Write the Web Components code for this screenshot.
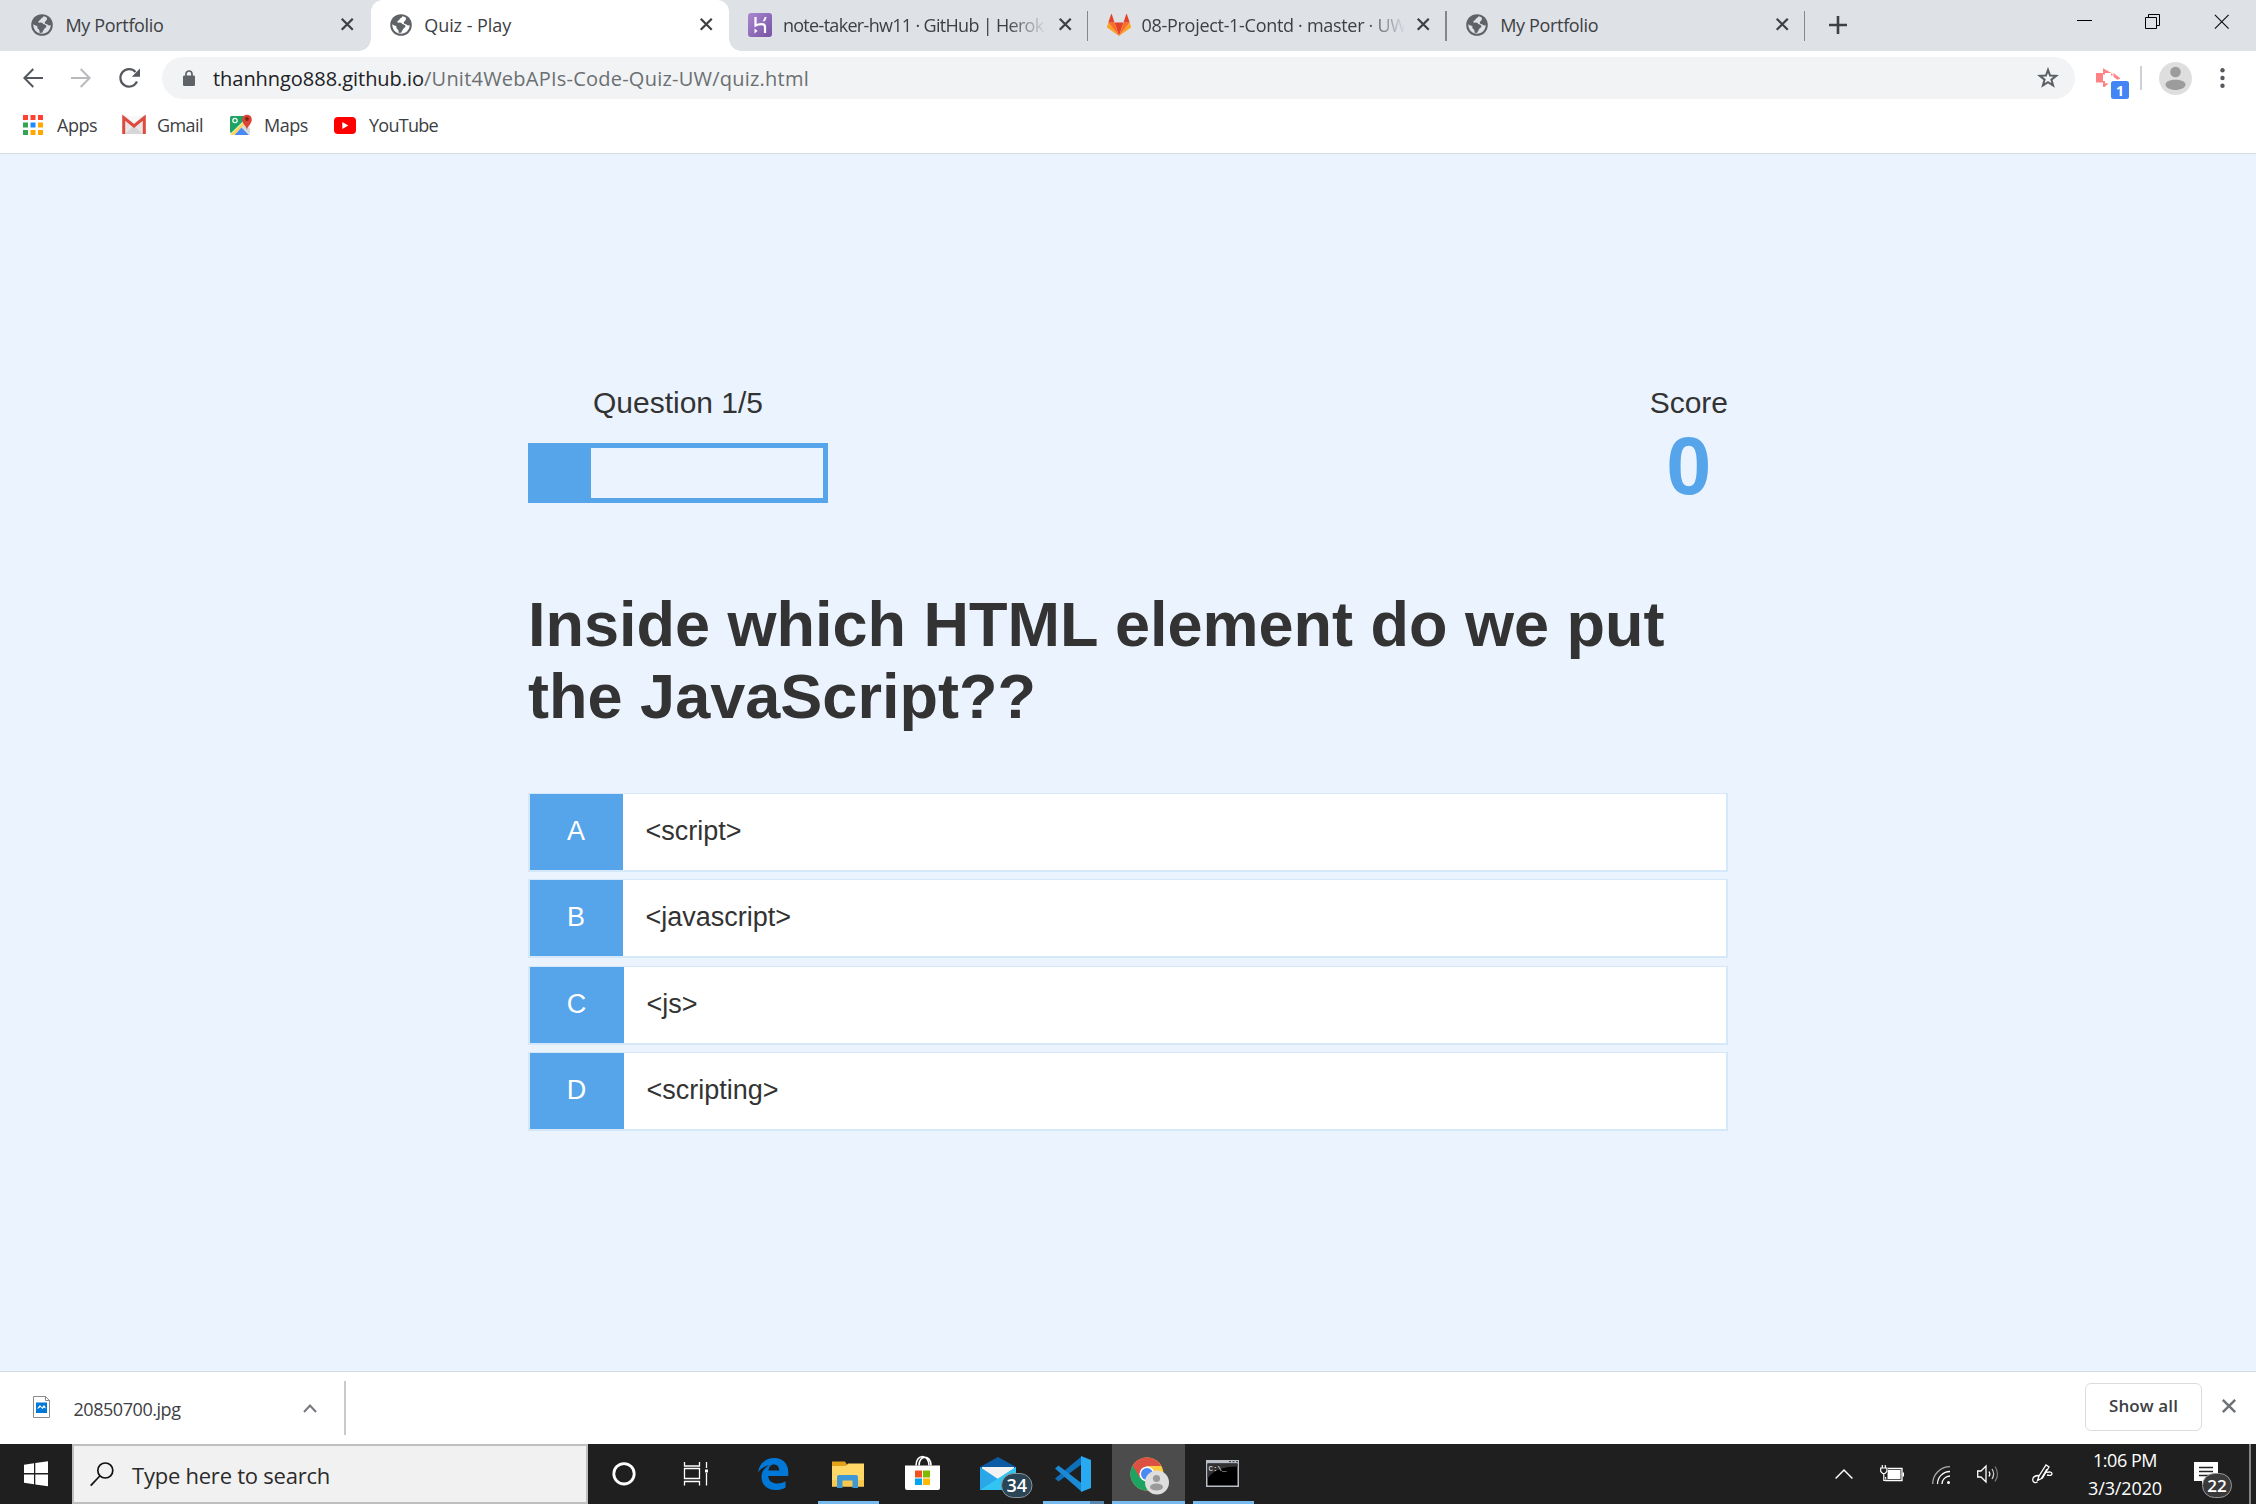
<!DOCTYPE html>
<html lang="en">
<head>
<meta charset="utf-8">
<title>Quiz - Play</title>
<style>
html,body{margin:0;padding:0}
body{width:2256px;height:1504px;overflow:hidden;display:flex;flex-direction:column;font-family:"Open Sans","Noto Sans",sans-serif;font-size:18px;color:#3c4043;background:#fff}
</style>
</head>
<body>
<tab-strip></tab-strip>
<address-bar></address-bar>
<bookmark-bar></bookmark-bar>
<quiz-game></quiz-game>
<download-shelf></download-shelf>
<task-bar></task-bar>
<script>
const globe='<svg width="22" height="22" viewBox="0 0 22 22"><circle cx="11" cy="11" r="10.8" fill="#5f6368"/><path d="M12.5 2.3C12 4 10 4 9.500 5.500c-.2 1-2 1-2.200 2.200 0 1 1.200 1 2.700.9 1.500 0 1.600 1 2.800 1.700 1.500.6 2.500.5 2.600 2 .1 1.600-1.700 1.500-2.200 2.700-.5 1.300-1.200 1.500-2 3.800-.9.2-1.700.2-2.600 0 0-1.500.1-2.800-1-3.500-1.200-.8-1.500-2-1.200-3.300C4.500 12 3 10.900 2.300 10c-.3 5.600 3.600 9.600 8.700 9.700 5 0 8.700-3.900 8.700-8.700-1 .9-2.600.3-3.300-.5-.7-.9-2.200-.4-2.600-1.600-.3-1.300 1.100-2 1.900-3 .3-.8.300-1.500.2-2.200-1.100-.8-2.200-1.200-3.400-1.400z" fill="var(--tab,#dee1e6)"/></svg>';
const X=(n,c,w)=>`<svg width="${n}" height="${n}" viewBox="0 0 12 12"><path d="M.7.7l10.600 10.600M11.300.7L.7 11.300" stroke="${c}" stroke-width="${w}"/></svg>`;
const ICONS={
 globe,
 heroku:'<svg width="24" height="24" viewBox="0 0 24 24"><defs><linearGradient id="h" x1="0" y1="0" x2="1" y2="1"><stop stop-color="#aa87cf"/><stop offset="1" stop-color="#7653a5"/></linearGradient></defs><rect width="24" height="24" rx="3" fill="url(#h)"/><path d="M7.500 4v8.500c3-1.600 9.500-2.600 9.500 1.200V20" fill="none" stroke="#fff" stroke-width="2.200"/><path d="M6.500 15.500L9.500 18l-3 2.500zM14.500 8.300c1.200-1.300 1.800-2.700 2-4.300h2c-.2 1.800-.9 3.200-2 4.300z" fill="#fff"/></svg>',
 gitlab:'<svg width="24" height="22" viewBox="0 0 24 22"><path d="M12 22l4.500-13.500h-9z" fill="#e24329"/><path d="M12 22L7.500 8.500H1.300zM12 22l4.500-13.500h6.200z" fill="#fc6d26"/><path d="M1.300 8.500L0 12.700c-.1.400 0 .8.400 1.100L12 22zM22.700 8.500L24 12.700c.1.400 0 .8-.4 1.100L12 22z" fill="#fca326"/><path d="M1.300 8.500h6.200L4.900.4c-.1-.5-.8-.5-.9 0zM22.700 8.500h-6.200L19.100.4c.1-.5.8-.5.900 0z" fill="#e24329"/></svg>',
 close:X(12.5,'#3c4043',2.1), shelfclose:X(14,'#6e7276',2.1), winclose:X(15.5,'#111',.9),
 plus:'<svg width="18" height="18" viewBox="0 0 18 18"><path d="M9 0v18M0 9h18" stroke="#3c4043" stroke-width="2.600"/></svg>',
 min:'<svg width="15" height="16"><path d="M0 7.500h15" stroke="#000"/></svg>',
 restore:'<svg width="16" height="16" fill="none" stroke="#000"><path d="M.5 3.500h11v11H.5zM3.500 3.500v-3h11v11h-3"/></svg>',
 back:'<svg width="20" height="20" viewBox="0 0 20 20" fill="none" stroke="#55595e" stroke-width="2"><path d="M20 10H1.600M10.300 1L1.400 10l8.900 9"/></svg>',
 fwd:'<svg width="20" height="20" viewBox="0 0 20 20" fill="none" stroke="#b8babd" stroke-width="2"><path d="M0 10h18.400M9.700 1l8.900 9-8.900 9"/></svg>',
 reload:'<svg width="21" height="20" viewBox="0 0 21 20"><path d="M18 13.500A8.700 8.700 0 1 1 16.500 4" fill="none" stroke="#55595e" stroke-width="2.200"/><path d="M21 .5v8.200h-8.200z" fill="#55595e"/></svg>',
 lock:'<svg width="12" height="16" viewBox="0 0 12 16"><rect y="5.500" width="12" height="10.500" rx="1.300" fill="#5f6368"/><path d="M3 6V4a3 3 0 0 1 6 0v2" fill="none" stroke="#5f6368" stroke-width="1.700"/></svg>',
 star:'<svg width="22" height="22" viewBox="0 0 22 22"><path d="M11 2.800l2.100 5.700 6.100.3-4.800 3.800 1.700 5.900L11 15.200l-5.100 3.300 1.700-5.900-4.800-3.800 6.100-.3z" fill="none" stroke="#5a5e63" stroke-width="2"/></svg>',
 ext:'<svg width="35" height="34" viewBox="0 0 35 34"><path d="M0 8h7v9.500H0zM7 3.200l8.500 4.800H7zM17.500 8l7 5.500-3.200 1.200-3.800-3zM7 18l5.500.5L8.500 22H7zM7 8h2v1.500H7zM7 16h2v2H7zM15 8.500h1.500v2H15z" fill="#ff8285"/><rect x="15" y="16" width="18" height="18" rx="2.500" fill="#4285f4"/><text x="24" y="30.500" text-anchor="middle" font-size="14" font-weight="700" fill="#fff" font-family="Open Sans">1</text></svg>',
 avatar:'<svg width="33" height="33" viewBox="0 0 33 33"><circle cx="16.500" cy="16.500" r="16.500" fill="#dedede"/><circle cx="16.500" cy="10" r="5.300" fill="#9c9c9c"/><path d="M6.500 22.500c0-3.200 5-4.800 10-4.800s10 1.600 10 4.800-5 5.500-10 5.500-10-2.300-10-5.500z" fill="#9c9c9c"/></svg>',
 dots:'<svg width="5" height="20" viewBox="0 0 5 20" fill="#55595e"><circle cx="2.500" cy="2.300" r="2.200"/><circle cx="2.500" cy="10" r="2.200"/><circle cx="2.500" cy="17.700" r="2.200"/></svg>',
 apps:'<svg width="20" height="20" viewBox="0 0 20 20"><path d="M0 0h5v5H0zM7.500 0h5v5h-5zM15 0h5v5h-5z" fill="#ff4131"/><path d="M0 7.500h5v5H0zM0 15h5v5H0z" fill="#34a354"/><path d="M7.500 7.500h5v5h-5z" fill="#1a8cff"/><path d="M15 7.500h5v5h-5zM7.500 15h5v5h-5zM15 15h5v5h-5z" fill="#ffa800"/></svg>',
 gmail:'<svg width="24" height="18" viewBox="0 0 24 18"><rect x="1" width="22" height="18" rx="1" fill="#e8e8e8"/><path d="M3 18l9-8 9 8z" fill="#d6d6d6"/><path d="M3 0h18l-9 7z" fill="#f8f8f8"/><path d="M1.700 18V1.700L12 10 22.300 1.700V18" fill="none" stroke="#dd4b3e" stroke-width="3"/></svg>',
 maps:'<svg width="23" height="22" viewBox="0 0 23 22"><rect x="0" y="2" width="20" height="19" rx="1.500" fill="#eee"/><path d="M0 3.500Q0 2 1.500 2h17L1 19 0 18z" fill="#1ea362"/><path d="M1 20L19 3l1 2L4 21H1z" fill="#ffd64b"/><path d="M4.500 21l7-7.500L19 21z" fill="#4a89f3"/><path d="M11.500 13.500L15.500 10 20 15v5z" fill="#d8d8d8"/><circle cx="5" cy="6.500" r="2.200" fill="none" stroke="#fff" stroke-width="1.200"/><path d="M17 16c-.4-4-4.800-6-4.800-10.500a4.800 4.800 0 0 1 9.600 0C21.800 10 17.400 12 17 16z" fill="#dc4335"/><circle cx="17" cy="5" r="1.900" fill="#7b231d"/></svg>',
 yt:'<svg width="22" height="17" viewBox="0 0 22 17"><rect width="22" height="17" rx="4" fill="#f00"/><path d="M8.300 5l6 3.500-6 3.500z" fill="#fff"/></svg>',
 file:'<svg width="17" height="22" viewBox="0 0 17 22"><path d="M.5.5h12l4 4v17H.5z" fill="#fff" stroke="#8b8b8b"/><path d="M12.500.5v4h4" fill="none" stroke="#8b8b8b"/><rect x="3" y="6.500" width="11" height="10.500" fill="#0078d7"/><path d="M4.500 13v-1l2.500-3 2 2.500L11 9l1.500 2v1.500L11 11.500l-1.500 1.500L7.500 11z" fill="#fff"/></svg>',
 chev:'<svg width="14" height="9" viewBox="0 0 14 9"><path d="M1 8l6-6.500L13 8" fill="none" stroke="#75797d" stroke-width="2"/></svg>',
 start:'<svg width="72" height="60" fill="#fff"><path d="M24 20.800l10-1.500v9.700H24zM35.300 19L48 17.200v11.800H35.300zM24 30.500h10v9.700l-10-1.500zM35.300 30.500H48v11.800l-12.700-1.900z"/></svg>',
 mag:'<svg width="24" height="25" viewBox="0 0 24 25" fill="none" stroke="#111" stroke-width="1.700"><circle cx="15.300" cy="8.500" r="7.500"/><path d="M9.800 14L.7 23.700"/></svg>',
 cortana:'<svg width="72" height="60"><circle cx="36" cy="29.800" r="10.200" fill="none" stroke="#fff" stroke-width="2.800"/></svg>',
 view:'<svg width="76" height="60" fill="none" stroke="#fff" stroke-width="1.300"><path d="M24.500 18v4h15v-4M24.500 41.500v-4h15v4M24.500 24.500h15v10h-15zM46.500 18v6M46.500 29v12.500"/><path d="M45 25.500h3v3h-3z" fill="#fff" stroke="none"/></svg>',
 edge:'<svg width="75" height="60"><path transform="translate(22,14)" fill="#0078d7" d="M0 14.500C1.500 4.500 8.500 0 16 0c9 0 14.300 6 14.300 14v4H10.200c.2 5.300 4.500 7.500 9.300 7.500 3 0 5.600-.8 8-2.200v6.500c-3 1.600-6.400 2.300-10 2.300C9.500 32.100 3.500 27 3.500 19c0-5.600 3.200-9.500 8.200-11.900C6.800 8 3 10.500 0 14.500zm10.500-2h10.700c0-3.800-2-6-5.300-6-3.200 0-5 2.500-5.400 6z"/></svg>',
 explorer:'<svg width="75" height="60"><path d="M21 17.500h13l2 3v4H21z" fill="#e3a21a"/><path d="M21 22h14l2-2.500h16v23H21z" fill="#ffd867"/><path d="M21 36h32v6.500H21z" fill="#f8c94f"/><path d="M26 44V33q0-2 2-2h17q2 0 2 2v11h-5.500v-7.500h-10V44z" fill="#3f98d6"/></svg>',
 store:'<svg width="75" height="60"><path d="M19 21.500h35V44q0 2-2 2H21q-2 0-2-2z" fill="#fff"/><path d="M30 21.500c0-12 13-12 13 0M33 21.500c0-11 12-11 12 0" fill="none" stroke="#fff" stroke-width="1.600"/><path d="M29 26.500h7v7h-7z" fill="#f25022"/><path d="M37 26.500h7v7h-7z" fill="#7fba00"/><path d="M29 34.500h7v6.500h-7z" fill="#00a4ef"/><path d="M37 34.500h7v6.500h-7z" fill="#ffb900"/></svg>',
 mail:'<svg width="75" height="60"><path d="M19 23L37 13l18 10v4H19z" fill="#0c59a4"/><path d="M21 23h32v12H21z" fill="#f2f2f2"/><path d="M19 23l18 12 18-12v23H19z" fill="#29a7e8"/><path d="M55 23L19 46h36z" fill="#32c5f4"/><rect x="40.500" y="29.500" width="30.500" height="24" rx="12" fill="#294556" stroke="#8d9499"/><text x="55.700" y="48" text-anchor="middle" font-size="18" font-weight="600" fill="#fff" font-family="Open Sans">34</text></svg>',
 code:'<svg width="75" height="60"><path d="M19 34.500l3.500 3L46 20v-8z" fill="#0d70b8"/><path d="M19 24.500l3.500-3 23.500 18V48z" fill="#1b89d3"/><path d="M45 12l10 4v28l-10 4z" fill="#29a9f2"/></svg>',
 chrome:'<svg width="75" height="60"><circle cx="36" cy="30" r="16.500" fill="#ffcd40"/><path d="M36 30L21.700 21.700A16.500 16.500 0 0 0 36 46.500l7-12z" fill="#1da462"/><path d="M21.700 21.700A16.500 16.500 0 0 1 50.300 22H36l-7 12z" fill="#dd5144"/><circle cx="36" cy="30" r="7.600" fill="#fff"/><circle cx="36" cy="30" r="6" fill="#4a8af4"/><circle cx="46" cy="38.500" r="12" fill="#dedede"/><circle cx="45.500" cy="34.500" r="3.600" fill="#9a9a9a"/><ellipse cx="45.500" cy="43" rx="6.500" ry="3.600" fill="#9a9a9a"/></svg>',
 cmd:'<svg width="75" height="60"><path d="M20 16h33v27H20z" fill="#b9bec7"/><path d="M21.500 19.500h30v22h-30z" fill="#000"/><path d="M21.500 19.500h30v3q-22 0-30 12z" fill="#333"/><path d="M43 17.700h2M46.500 17.700h2M50 17.700h2" stroke="#333"/><text x="22.500" y="27" font-size="7.500" fill="#fff" font-family="Liberation Mono">C:\\_</text></svg>',
 up:'<svg width="18" height="10" viewBox="0 0 18 10"><path d="M.6 9.500L9 1l8.400 8.500" fill="none" stroke="#fff" stroke-width="1.500"/></svg>',
 battery:'<svg width="24" height="17" viewBox="0 0 24 17"><path d="M8 3.500h14v12H5.500V12" fill="none" stroke="#fff" stroke-width="1.300"/><path d="M8 5h12.500v9H7.500V9zM22.500 7.500H24v4h-1.500z" fill="#fff"/><path d="M2.300 0v3M5.300 0v3M.7 3h6.200v3.500L5 8.500H2.600L.7 6.500zM3.800 8.500v7h2" fill="#1f1f1f" stroke="#fff" stroke-width="1.200"/></svg>',
 wifi:'<svg width="18" height="18" viewBox="0 0 18 18" fill="none" stroke-width="1.300"><path d="M.7 18A17.300 17.300 0 0 1 18 .7" stroke="#aaa"/><path d="M5.500 18A12.500 12.500 0 0 1 18 5.500M10 18a8 8 0 0 1 8-8" stroke="#fff"/><circle cx="16.500" cy="16.500" r="1.500" fill="#fff"/></svg>',
 volume:'<svg width="22" height="18" viewBox="0 0 22 18" fill="none" stroke="#fff" stroke-width="1.300"><path d="M.7 6v6H4l5 5V1L4 6zM12 6.500q1.700 2.500 0 5"/><path d="M15 4q3.300 5 0 10" stroke="#ccc"/><path d="M18 1.500q5 7.500 0 15" stroke="#777"/></svg>',
 pen:'<svg width="21" height="20" viewBox="0 0 21 20" fill="none" stroke="#fff" stroke-width="1.300"><path d="M5.500 16.500L7 12 14 1l3 2-6.500 11zM15 5l-6 10M7 11.500C3 11.500.7 13 .7 15.800S3.500 19.300 5.500 18M14.500 8.500c3-1 5.500-.5 5.500 1.200 0 1.800-2.500 2-5 1.300"/></svg>',
 notif:'<svg width="40" height="40" viewBox="0 0 40 40"><path d="M0 0h24v19H12l-4 4.500V19H0z" fill="#fff"/><path d="M5 5.500h14M5 9.500h14M5 13.500h10" stroke="#222" stroke-width="1.300"/><rect x="8.500" y="11.500" width="29" height="24" rx="12" fill="#3a3a3a" stroke="#999"/><text x="23" y="30" text-anchor="middle" font-size="17" font-weight="600" fill="#fff" font-family="Open Sans">22</text></svg>'
};
class Base extends HTMLElement{
  connectedCallback(){ if(this.shadowRoot)return; this.attachShadow({mode:'open'}).innerHTML=this.view(); this.ready&&this.ready(); }
}
const def=(n,view,ready)=>customElements.define(n,class extends Base{view(){return view(this)} ready(){ready&&ready(this)}});

/* Inline vector icon picked by name */
def('ui-icon',e=>`<style>:host{display:block;flex:none}svg{display:block;overflow:visible}</style>${ICONS[e.getAttribute('name')]}`);

/* Single-line label tracked to a fixed advance width */
def('ui-label',e=>`<style>:host{display:block;flex:none;white-space:nowrap}span{display:inline-block}</style><span><slot></slot></span>`,e=>{
  const w=+e.getAttribute('w'); if(!w)return;
  const s=e.shadowRoot.querySelector('span'), n=e.textContent.length;
  s.style.letterSpacing=((w-s.getBoundingClientRect().width)/n)+'px';
  e.style.width=w+'px';
});

def('browser-tab',e=>`<style>
:host{display:flex;box-sizing:border-box;width:358.700px;height:51px;align-items:center;padding:0 17px 2px 19px;position:relative;flex:none}
:host([active]){background:#fff;--tab:#fff;border-radius:12px 12px 0 0}
:host([active])::before,:host([active])::after{content:"";position:absolute;bottom:0;width:12px;height:12px}
:host([active])::before{left:-12px;background:radial-gradient(circle at 0 0,transparent 11.5px,#fff 12px)}
:host([active])::after{right:-12px;background:radial-gradient(circle at 100% 0,transparent 11.5px,#fff 12px)}
.i{width:34.500px}.t{width:262px;overflow:hidden}
:host([long]) .t{-webkit-mask:linear-gradient(90deg,#000 224px,transparent 264px)}
.s{position:absolute;right:0;top:11px;width:1.5px;height:30px;background:#84888d}
</style><div class="i"><ui-icon name="${e.getAttribute('icon')}"></ui-icon></div><div class="t"><slot></slot></div><ui-icon name="close" style="margin-left:auto"></ui-icon>${e.hasAttribute('sep')?'<i class="s"></i>':''}`);

def('tab-strip',()=>`<style>:host{display:flex;height:51px;background:#dee1e6;padding-left:12px;align-items:center;flex:none}
.w{display:flex;align-items:center;margin:0 27px 8px auto}</style>
<browser-tab icon="globe"><ui-label w="98">My Portfolio</ui-label></browser-tab>
<browser-tab icon="globe" active><ui-label w="87">Quiz - Play</ui-label></browser-tab>
<browser-tab icon="heroku" sep long><ui-label w="271">note-taker-hw11 · GitHub | Heroku</ui-label></browser-tab>
<browser-tab icon="gitlab" sep long><ui-label w="265">08-Project-1-Contd · master · UW</ui-label></browser-tab>
<browser-tab icon="globe" sep><ui-label w="98">My Portfolio</ui-label></browser-tab>
<ui-icon name="plus" style="margin-left:24px;margin-bottom:1px"></ui-icon>
<div class="w"><ui-icon name="min" style="margin-bottom:1px"></ui-icon><ui-icon name="restore" style="margin-left:53px"></ui-icon><ui-icon name="winclose" style="margin-left:53px"></ui-icon></div>`);

def('address-bar',()=>`<style>:host{display:flex;height:48px;align-items:center;box-sizing:border-box;padding:6px 31px 0 23px;background:#fff;flex:none}
.n{display:flex;gap:28px;width:139px}.o{display:flex;align-items:center;width:1913px;height:42px;border-radius:21px;background:#f1f3f4;box-sizing:border-box;padding:0 16px 0 21px;font-size:20px;color:#202124}
.p{color:#6b6f73}.sep{width:1.5px;height:24px;background:#cdd0d4;margin-left:9px}</style>
<div class="n"><ui-icon name="back"></ui-icon><ui-icon name="fwd"></ui-icon><ui-icon name="reload"></ui-icon></div>
<div class="o"><ui-icon name="lock" style="margin-right:18px"></ui-icon><ui-label w="211">thanhngo888.github.io</ui-label><ui-label class="p" w="385">/Unit4WebAPIs-Code-Quiz-UW/quiz.html</ui-label><ui-icon name="star" style="margin-left:auto"></ui-icon></div>
<ui-icon name="ext" style="margin:8px 0 0 21px"></ui-icon><i class="sep"></i><ui-icon name="avatar" style="margin-left:17px"></ui-icon><ui-icon name="dots" style="margin-left:auto"></ui-icon>`);

def('bookmark-bar',()=>`<style>:host{display:flex;height:55px;box-sizing:border-box;border-bottom:1px solid #d3dae4;padding:0 0 2px 23px;align-items:center;background:#fff;flex:none}</style>
<ui-icon name="apps"></ui-icon><ui-label w="40" style="margin-left:14px">Apps</ui-label>
<ui-icon name="gmail" style="margin-left:25px"></ui-icon><ui-label w="46" style="margin-left:11px">Gmail</ui-label>
<ui-icon name="maps" style="margin-left:27px"></ui-icon><ui-label w="44" style="margin-left:11px">Maps</ui-label>
<ui-icon name="yt" style="margin-left:26px"></ui-icon><ui-label w="69" style="margin-left:13px">YouTube</ui-label>`);

def('quiz-progress',()=>`<style>:host{display:block;box-sizing:border-box;width:300px;height:60px;border:5px solid #56a5eb}div{width:58px;height:100%;background:#56a5eb}</style><div></div>`);

def('quiz-choice',e=>`<style>:host{display:flex;box-sizing:border-box;height:79px;border:2px solid #d4e8fa;border-top-width:1.5px;background:#fff;font-size:27px}
b{font-weight:400;background:#56a5eb;color:#fff;width:${e.getAttribute('pw')||93}px;display:flex;align-items:center;justify-content:center;padding:0 1px 1px 0;box-sizing:border-box}
div{display:flex;align-items:center;padding:0 0 1px 22.500px}</style><b>${e.getAttribute('letter')}</b><div><slot></slot></div>`);

def('quiz-game',()=>`<style>:host{display:flex;flex-direction:column;box-sizing:border-box;height:1217px;padding:229px 528px 0;background:#ebf3ff;font-family:"Liberation Sans",Arial,sans-serif;color:#333;flex:none}
.hud{display:flex;justify-content:space-between;height:124px}.hud>div{display:flex;flex-direction:column;align-items:center}
.t{font-size:30px;line-height:40px;margin:0}.s{font-size:81px;line-height:80px;font-weight:700;color:#56a5eb;margin:3px 0 0}
h2{font-size:63px;line-height:72px;margin:81px 0 61px}
.c{display:flex;flex-direction:column;gap:7px}</style>
<div class="hud"><div><p class="t">Question 1/5</p><quiz-progress style="margin-top:20px"></quiz-progress></div><div><p class="t">Score</p><p class="s">0</p></div></div>
<h2><ui-label w="1136.500">Inside which HTML element do we put</ui-label><ui-label w="508">the JavaScript??</ui-label></h2>
<div class="c"><quiz-choice letter="A">&lt;script&gt;</quiz-choice><quiz-choice letter="B">&lt;javascript&gt;</quiz-choice><quiz-choice letter="C" pw="94" style="margin-top:1px">&lt;js&gt;</quiz-choice><quiz-choice letter="D" pw="94">&lt;scripting&gt;</quiz-choice></div>`);

def('download-shelf',()=>`<style>:host{display:flex;box-sizing:border-box;height:73px;border-top:1px solid #d3dae4;background:#fff;padding:0 20px 0 33px;align-items:center;flex:none}
.v{width:1.5px;height:54px;background:#c8cacc;margin-left:27px}
.b{box-sizing:border-box;width:117px;height:48px;border:1.500px solid #dadce0;border-radius:6px;display:flex;align-items:center;justify-content:center;margin:0 20px 3px auto;font-weight:600;font-size:17px;padding-bottom:2px}</style>
<ui-icon name="file" style="margin-bottom:3px"></ui-icon><ui-label w="107" style="margin:1px 0 0 23.500px">20850700.jpg</ui-label><ui-icon name="chev" style="margin-left:122.500px"></ui-icon><i class="v"></i>
<div class="b"><ui-label w="69">Show all</ui-label></div><ui-icon name="shelfclose" style="margin-bottom:4px"></ui-icon>`);

def('task-item',e=>`<style>:host{display:block;position:relative;width:75px;height:60px;flex:none}
:host([focused])::before{content:"";position:absolute;left:1px;top:0;width:73px;height:60px;background:#4c4c4c}
ui-icon{position:relative}
:host([open])::after{content:"";position:absolute;left:7px;bottom:0;width:61px;height:3px;background:#76b9ed}
:host([multi])::after{background:linear-gradient(90deg,#76b9ed 47px,#5a87ad 47px)}
:host([focused])::after{left:1px;width:73px}</style><ui-icon name="${e.getAttribute('icon')}"></ui-icon>`);

def('task-bar',()=>`<style>:host{display:flex;height:60px;background:#1f1f1f;align-items:center;color:#fff;flex:none}
.q{display:flex;box-sizing:border-box;width:516px;height:60px;border:2px solid #bfbfbf;background:#f1f1f1;align-items:center;padding-left:16px;color:#2b2b2b;font-size:22px}
.tray{display:flex;align-items:center;height:60px;margin-left:auto}
.k{display:flex;flex-direction:column;align-items:center;line-height:28px;margin-left:34px;width:76px}
.end{width:1.500px;height:60px;background:#858585;margin:0 5.500px 0 15px}</style>
<ui-icon name="start"></ui-icon><div class="q"><ui-icon name="mag"></ui-icon><ui-label w="198" style="margin:1px 0 0 18px">Type here to search</ui-label></div>
<ui-icon name="cortana"></ui-icon><ui-icon name="view"></ui-icon>
<task-item icon="edge"></task-item><task-item icon="explorer" open></task-item><task-item icon="store"></task-item><task-item icon="mail"></task-item><task-item icon="code" open multi></task-item><task-item icon="chrome" open focused></task-item><task-item icon="cmd" open></task-item>
<div class="tray"><ui-icon name="up"></ui-icon><ui-icon name="battery" style="margin:0 0 1px 27px"></ui-icon><ui-icon name="wifi" style="margin:2px 0 0 28px"></ui-icon><ui-icon name="volume" style="margin-left:27px"></ui-icon><ui-icon name="pen" style="margin-left:33px"></ui-icon>
<div class="k"><ui-label w="64">1:06 PM</ui-label><ui-label w="74">3/3/2020</ui-label></div>
<ui-icon name="notif" style="margin:16px 0 0 31px"></ui-icon><i class="end"></i></div>`);
</script>
</body>
</html>
